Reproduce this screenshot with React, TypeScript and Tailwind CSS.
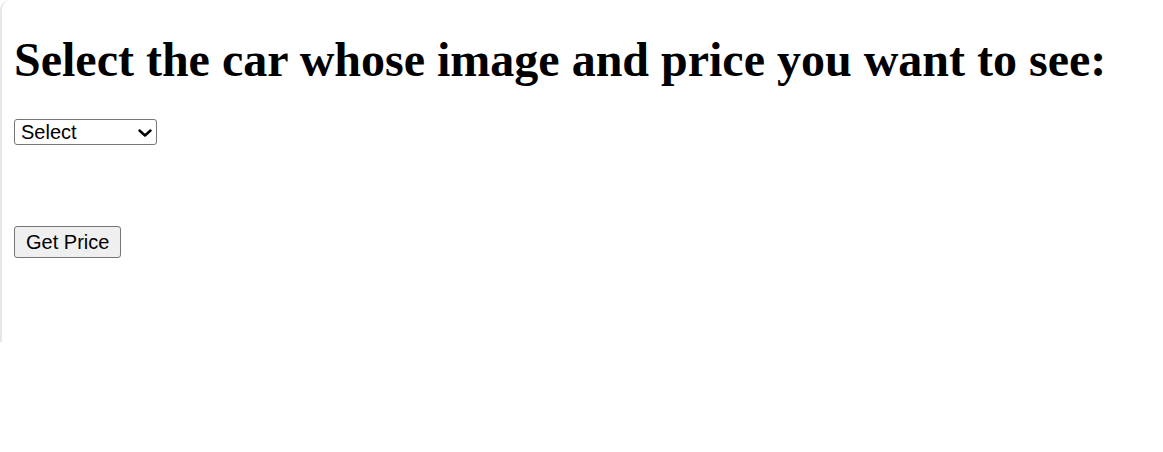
export default function App() {
  return (
    <div className="h-[452px] w-full bg-white">
      <div className="h-[342px] rounded-tl-[10px] border-l-2 border-[#e6e6e6] pl-[12px] pt-[32px]">
        <h1 className="m-0 font-['Liberation_Serif',serif] text-[48px] font-bold leading-[55px] text-black">
          Select the car whose image and price you want to see:
        </h1>
        <div className="relative mt-[32px] w-[143px]">
          <select
            defaultValue="Select"
            className="block h-[26px] w-[143px] appearance-none rounded-[3px] border border-[#767676] bg-white pl-[6px] font-['Liberation_Sans',Arial,sans-serif] text-[20px] leading-none text-black"
          >
            <option>Select</option>
            <option>Audi</option>
            <option>BMW</option>
            <option>Mercedes</option>
          </select>
          <svg
            className="pointer-events-none absolute right-[5px] top-[10px]"
            width="14"
            height="8"
            viewBox="0 0 14 8"
            fill="none"
          >
            <path d="M1.5 1.5 L7 6.5 L12.5 1.5" stroke="#000" strokeWidth="2.4" strokeLinecap="round" strokeLinejoin="round" />
          </svg>
        </div>
        <div className="mt-[81px]">
          <button
            type="button"
            className="h-[32px] rounded-[3px] border border-[#767676] bg-[#efefef] px-[11px] font-['Liberation_Sans',Arial,sans-serif] text-[20px] leading-none text-black"
          >
            Get Price
          </button>
        </div>
      </div>
    </div>
  );
}
